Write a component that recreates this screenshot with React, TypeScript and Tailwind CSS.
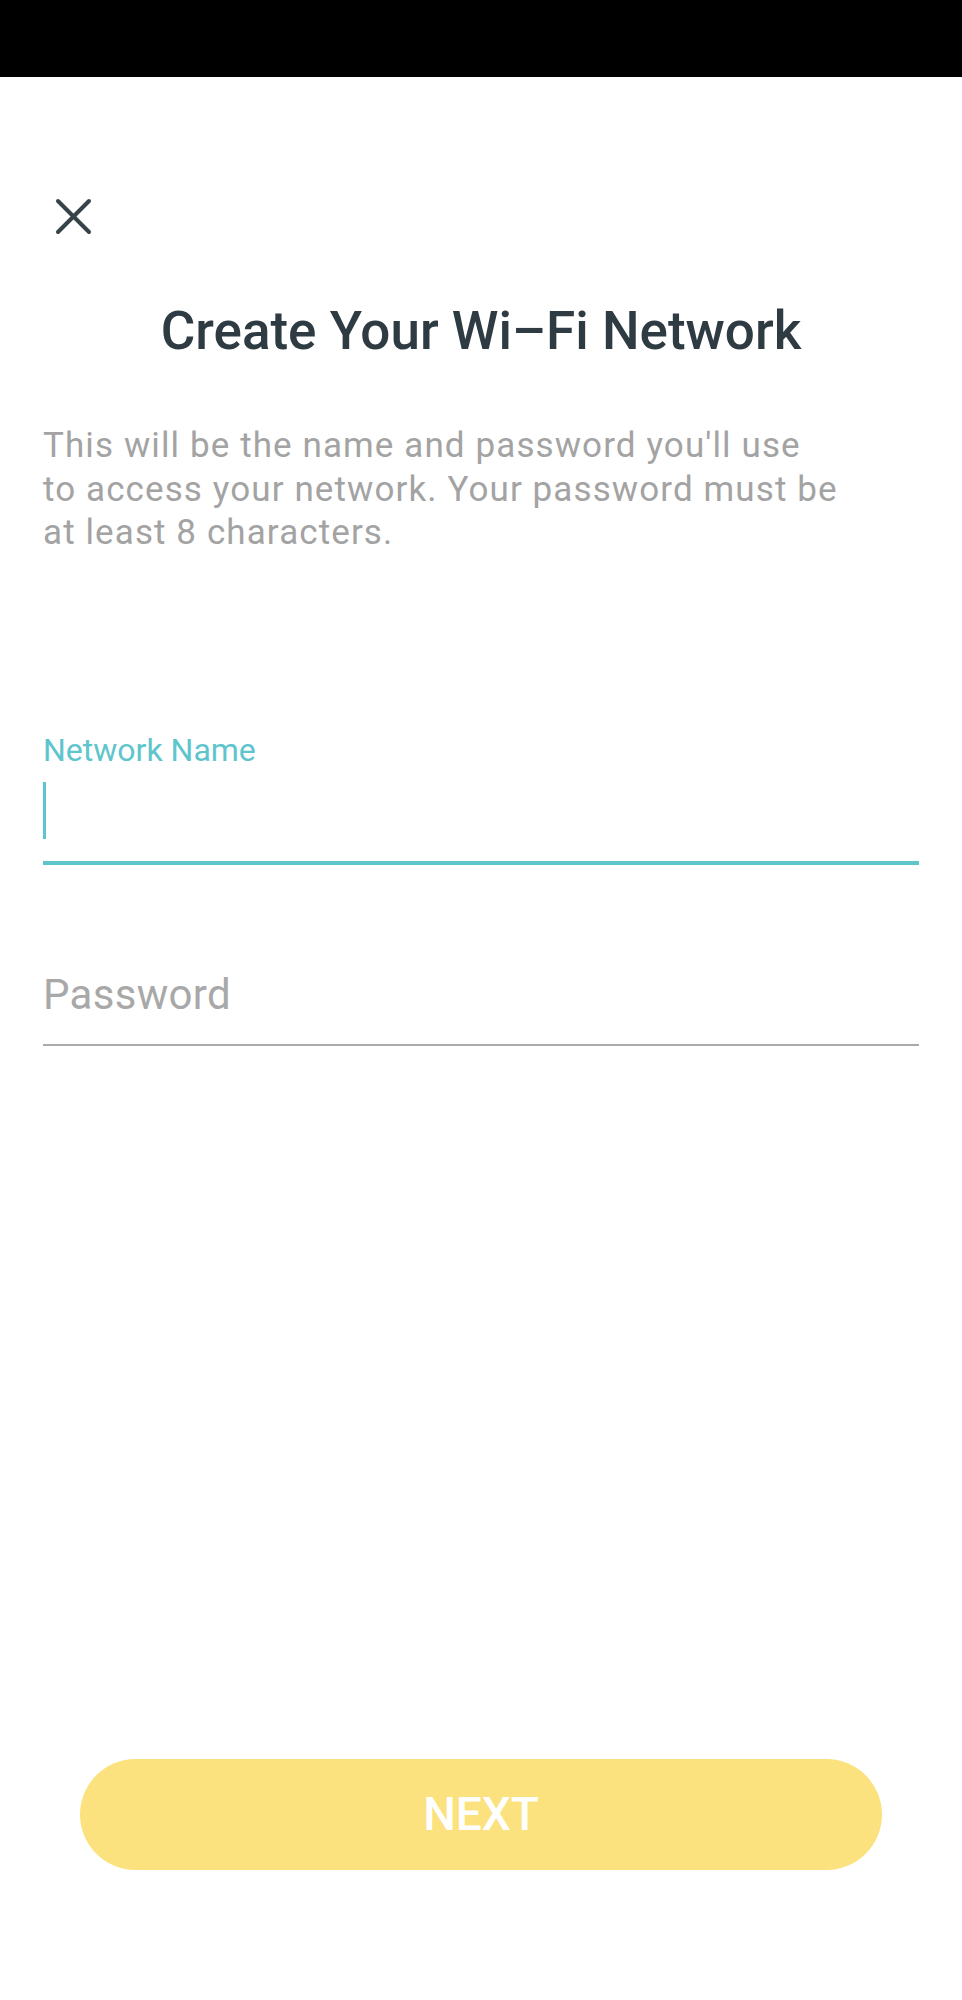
export default function App() {
  return (
    <div className="min-h-[2000px] bg-white" style={{ fontFamily: 'Roboto, "Noto Sans", sans-serif' }}>
      {/* Status bar */}
      <div className="h-[77px] bg-black" />

      <div className="px-[43px]">
        {/* Close */}
        <button className="mt-[121px] ml-[12px] block h-[37px] w-[37px] text-[#37434a]">
          <svg viewBox="0 0 37 37" className="h-[37px] w-[37px]" fill="none" stroke="currentColor" strokeWidth="4" strokeLinecap="round">
            <line x1="3" y1="3" x2="34" y2="34" />
            <line x1="34" y1="3" x2="3" y2="34" />
          </svg>
        </button>

        {/* Title */}
        <h1 className="mt-[66px] text-center text-[53px] font-medium leading-[60px] text-[#2f3b42]">
          Create Your Wi–Fi Network
        </h1>

        {/* Description */}
        <p className="mt-[63px] text-[35px] leading-[43.5px] tracking-[1.1px] text-[#a3a3a3]">
          This will be the name and password you'll use
          <br />
          to access your network. Your password must be
          <br />
          at least 8 characters.
        </p>

        {/* Network name field */}
        <div className="mt-[177px]">
          <label className="block text-[32px] leading-[36px] text-[#5ec5cc]">Network Name</label>
          <div className="h-[97px] border-b-4 border-[#5ec5cc] pt-[14px]">
            <div className="h-[57px] w-[3px] bg-[#5ec5cc]" />
          </div>
        </div>

        {/* Password field */}
        <div className="mt-[105px] border-b-2 border-[#aaaaaa] pb-[24px]">
          <div className="text-[42px] leading-[50px] tracking-[0.3px] text-[#a8a8a8]">Password</div>
        </div>
      </div>

      {/* Next button */}
      <div className="px-[80px] pt-[713px]">
        <button className="flex h-[111px] w-full items-center justify-center rounded-full bg-[#fce27f] text-[46px] font-medium text-white">
          NEXT
        </button>
      </div>
    </div>
  );
}
